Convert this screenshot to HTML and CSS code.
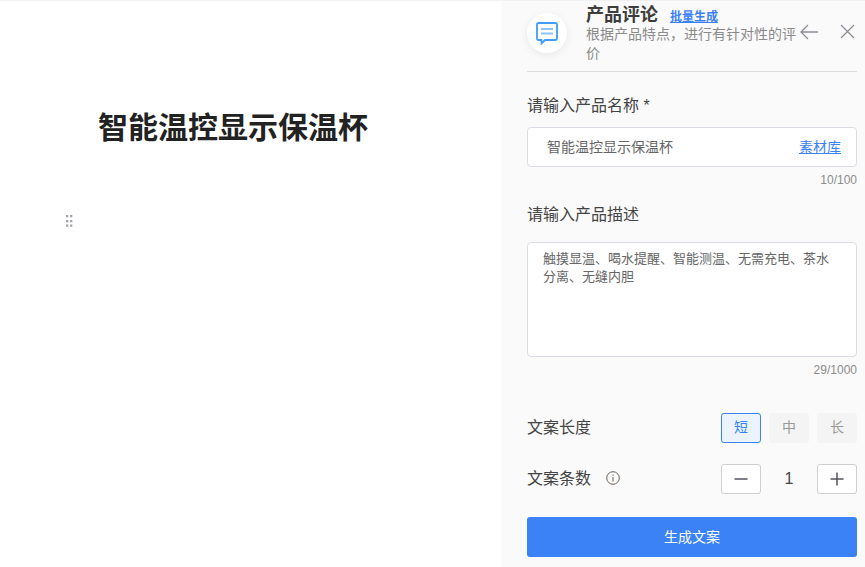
FILE: index.html
```html
<!DOCTYPE html>
<html lang="zh-CN">
<head>
    <meta charset="UTF-8">
    <meta name="viewport" content="width=device-width, initial-scale=1.0">
    <title>产品评论</title>
    <link rel="stylesheet" href="styles.css">
</head>
<body>
    <main class="editor">
        <h1 class="doc-title">智能温控显示保温杯</h1>
        <div class="drag-row">
            <svg class="drag-handle" width="10" height="14" viewBox="0 0 10 14">
                <g fill="#a3a3ab">
                    <rect x="2" y="1" width="2.300" height="2.300"/><rect x="6" y="1" width="2.300" height="2.300"/>
                    <rect x="2" y="6" width="2.300" height="2.300"/><rect x="6" y="6" width="2.300" height="2.300"/>
                    <rect x="2" y="10.500" width="2.300" height="2.300"/><rect x="6" y="10.500" width="2.300" height="2.300"/>
                </g>
            </svg>
        </div>
    </main>

    <aside class="panel">
        <header class="panel-head">
            <div class="head-icon">
                <svg width="22" height="23" viewBox="0 0 22 23" fill="none">
                    <path d="M2.500 1h17a1.500 1.500 0 0 1 1.500 1.500v14a1.500 1.500 0 0 1-1.500 1.500H9l-3.500 3.500V18h-3A1.500 1.500 0 0 1 1 16.500v-14A1.500 1.500 0 0 1 2.500 1z" stroke="#3f9cf8" stroke-width="1.800"/>
                    <path d="M5 7h12M5 11.500h12" stroke="#8cc4fb" stroke-width="2"/>
                </svg>
            </div>
            <div class="head-text">
                <div class="head-title">
                    <h2>产品评论</h2>
                    <a href="#" class="batch-link">批量生成</a>
                </div>
                <p>根据产品特点，进行有针对性的评价</p>
            </div>
            <div class="head-actions">
                <svg width="20" height="16" viewBox="0 0 20 16" fill="none" stroke="#8f8d96" stroke-width="1.300">
                    <path d="M19 8H2M9 1L2 8l7 7"/>
                </svg>
                <svg width="15" height="15" viewBox="0 0 15 15" fill="none" stroke="#8f8d96" stroke-width="1.300">
                    <path d="M1 1l13 13M14 1L1 14"/>
                </svg>
            </div>
        </header>

        <section class="field field-name">
            <label class="field-label">请输入产品名称 *</label>
            <div class="input-box">
                <span>智能温控显示保温杯</span>
                <a href="#">素材库</a>
            </div>
            <div class="counter">10/100</div>
        </section>

        <section class="field field-desc">
            <label class="field-label">请输入产品描述</label>
            <div class="text-box">触摸显温、喝水提醒、智能测温、无需充电、茶水分离、无缝内胆</div>
            <div class="counter">29/1000</div>
        </section>

        <div class="option-row row-length">
            <span class="option-label">文案长度</span>
            <div class="choices">
                <button class="choice active">短</button>
                <button class="choice">中</button>
                <button class="choice">长</button>
            </div>
        </div>

        <div class="option-row row-count">
            <span class="option-label">文案条数
                <svg class="info-icon" width="14" height="14" viewBox="0 0 14 14" fill="none" stroke="#6b5f55">
                    <circle cx="7" cy="7" r="6.300"/>
                    <path d="M7 6v4.500M7 3.500v1.300"/>
                </svg>
            </span>
            <div class="stepper">
                <button class="step-btn">
                    <svg width="14" height="14" viewBox="0 0 14 14" stroke="#55525f" stroke-width="1.500"><path d="M0.500 7h13"/></svg>
                </button>
                <span class="step-value">1</span>
                <button class="step-btn">
                    <svg width="14" height="14" viewBox="0 0 14 14" stroke="#55525f" stroke-width="1.500"><path d="M0.500 7h13M7 0.500v13"/></svg>
                </button>
            </div>
        </div>

        <button class="submit-btn">生成文案</button>
    </aside>
</body>
</html>
```

FILE: styles.css
```css
* {
    box-sizing: border-box;
}
html, body {
    height: 100%;
}
body {
    margin: 0;
    display: flex;
    height: 567px;
    overflow: hidden;
    font-family: "Liberation Sans", "Noto Sans CJK SC", sans-serif;
    background: #fff;
    border-top: 1px solid #f1f1f1;
}
a {
    color: #3b82f6;
}
button {
    font-family: inherit;
    cursor: pointer;
}
.editor {
    flex: 1;
    min-width: 0;
    padding: 90px 0 0 64px;
}
.doc-title {
    margin: 0 0 0 34px;
    font-size: 30px;
    line-height: 74px;
    font-weight: 700;
    color: #222;
}
.drag-row {
    margin-top: 49px;
    height: 14px;
}
.drag-handle {
    display: block;
}
.panel {
    width: 362px;
    height: 566px;
    flex-shrink: 0;
    padding: 0 8px 0 24px;
    background: #fafafa;
    box-shadow: -1px 0 2px rgba(0, 0, 0, 0.04);
}
.panel-head {
    display: flex;
    height: 71px;
    border-bottom: 1px solid #dedede;
}
.head-icon {
    width: 40px;
    height: 40px;
    margin-top: 12px;
    flex-shrink: 0;
    display: flex;
    align-items: center;
    justify-content: center;
    border-radius: 50%;
    background: #fff;
    box-shadow: 0 2px 8px rgba(0, 0, 0, 0.08);
}
.head-text {
    width: 213px;
    margin-left: 19px;
    flex-shrink: 0;
}
.head-title {
    display: flex;
    align-items: center;
    height: 24px;
    padding-top: 4px;
}
.head-title h2 {
    margin: 0;
    font-size: 18px;
    line-height: 20px;
    font-weight: 700;
    color: #3d3d3d;
}
.batch-link {
    margin-left: 12px;
    font-size: 12px;
    font-weight: 700;
}
.head-text p {
    margin: 0;
    font-size: 14px;
    line-height: 19px;
    color: #8a8a8a;
}
.head-actions {
    display: flex;
    gap: 21px;
    margin-top: 23px;
    align-items: flex-start;
}
.field-name {
    padding-top: 23px;
}
.field-desc {
    padding-top: 16px;
}
.field-label {
    display: block;
    font-size: 16px;
    line-height: 22px;
    color: #444;
}
.input-box {
    display: flex;
    align-items: center;
    justify-content: space-between;
    height: 40px;
    margin-top: 10px;
    padding: 0 15px 2px 19px;
    background: #fff;
    border: 1px solid #dcdce4;
    border-radius: 4px;
    font-size: 14px;
    color: #666;
}
.text-box {
    height: 115px;
    margin-top: 16px;
    padding: 7px 15px;
    background: #fff;
    border: 1px solid #dcdce4;
    border-radius: 4px;
    font-size: 13px;
    line-height: 18px;
    color: #666;
}
.counter {
    margin-top: 5px;
    font-size: 12px;
    line-height: 16px;
    text-align: right;
    color: #8c8c8c;
}
.option-row {
    display: flex;
    align-items: center;
    justify-content: space-between;
    height: 30px;
}
.row-length {
    margin-top: 35px;
}
.row-count {
    margin-top: 21px;
}
.option-label {
    display: flex;
    align-items: center;
    padding-bottom: 4px;
    font-size: 16px;
    color: #444;
}
.info-icon {
    margin: 2px 0 0 15px;
}
.choices {
    display: flex;
    gap: 8px;
}
.choice {
    width: 40px;
    height: 30px;
    padding: 0 0 4px;
    font-size: 14px;
    color: #999;
    background: #f4f4f4;
    border: none;
    border-radius: 3px;
}
.choice.active {
    color: #3b82f6;
    background: #eaf3fe;
    border: 1px solid #3b82f6;
}
.stepper {
    display: flex;
    align-items: center;
}
.step-btn {
    display: flex;
    align-items: center;
    justify-content: center;
    width: 40px;
    height: 30px;
    padding: 0;
    background: #fff;
    border: 1px solid #cfcfcf;
    border-radius: 3px;
}
.step-value {
    width: 56px;
    font-size: 16px;
    text-align: center;
    color: #444;
}
.submit-btn {
    display: block;
    width: 100%;
    height: 40px;
    margin-top: 23px;
    padding: 0 0 2px;
    font-size: 14px;
    color: #fff;
    background: #3b82f6;
    border: none;
    border-radius: 3px;
}
```
